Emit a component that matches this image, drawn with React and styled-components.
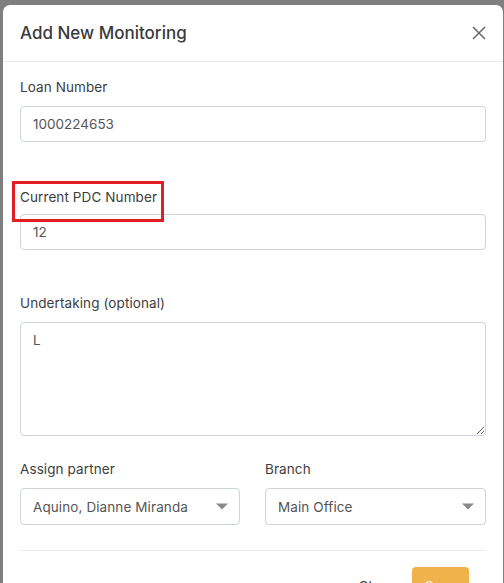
import React from 'react';
import styled, { createGlobalStyle } from 'styled-components';

const GlobalStyle = createGlobalStyle`
  html, body {
    margin: 0;
    padding: 0;
    background: #7f7f7f;
    overflow: hidden;
  }
  body {
    font-family: Inter, "Open Sans", sans-serif;
    color: #333;
  }
`;

const Backdrop = styled.div`
  height: 583px;
  padding: 5px 1px 0 3px;
  box-sizing: border-box;
`;

const Modal = styled.div`
  width: 500px;
  height: 600px;
  background: #fff;
  border-radius: 7px;
  overflow: hidden;
`;

const Header = styled.div`
  height: 57px;
  box-sizing: border-box;
  display: flex;
  align-items: center;
  justify-content: space-between;
  padding: 0 15px 0 17px;
  border-bottom: 1px solid #e9ecef;
`;

const Title = styled.h5`
  margin: 0;
  font-size: 17px;
  font-weight: 500;
  color: #3a3a3a;
`;

const CloseButton = styled.button`
  border: none;
  background: none;
  padding: 0;
  width: 18px;
  height: 18px;
  display: flex;
  align-items: center;
  justify-content: center;
  cursor: pointer;
`;

const Body = styled.div`
  padding: 15px 17px 0;
`;

const FormGroup = styled.div`
  margin-bottom: ${p => p.$space}px;
`;

const LabelWrap = styled.div`
  position: relative;
  display: inline-block;
`;

const Label = styled.label`
  display: block;
  font-size: 13.5px;
  line-height: 20px;
  letter-spacing: 0.1px;
  font-weight: 400;
  color: #3d3d3d;
  margin-bottom: ${p => p.$gap || 9}px;
`;

const Highlight = styled.span`
  position: absolute;
  top: -6px;
  left: -8px;
  width: 152px;
  height: 41px;
  box-sizing: border-box;
  border: 3px solid #e31b23;
  pointer-events: none;
`;

const Input = styled.input`
  display: block;
  width: 100%;
  height: 36px;
  box-sizing: border-box;
  padding: 0 12px;
  border: 1px solid #ced4da;
  border-radius: 4px;
  font-family: inherit;
  font-size: 13.5px;
  color: #555;
  outline: none;
`;

const TextArea = styled.textarea`
  display: block;
  width: 100%;
  height: 114px;
  box-sizing: border-box;
  padding: 9px 12px;
  border: 1px solid #ced4da;
  border-radius: 4px;
  font-family: inherit;
  font-size: 13.5px;
  color: #555;
  outline: none;
`;

const Row = styled.div`
  display: grid;
  grid-template-columns: 220px 221px;
  column-gap: 25px;
`;

const SelectBox = styled.div`
  height: 37px;
  box-sizing: border-box;
  display: flex;
  align-items: center;
  padding: 0 10px 0 12px;
  border: 1px solid #ced4da;
  border-radius: 4px;
`;

const Select = styled.select`
  flex: 1;
  min-width: 0;
  appearance: none;
  border: none;
  background: transparent;
  padding: 0;
  font-family: inherit;
  font-size: 13.5px;
  letter-spacing: 0.1px;
  color: #555;
  outline: none;
`;

const Divider = styled.hr`
  margin: 0;
  border: none;
  border-top: 1px solid #e9ecef;
`;

const Footer = styled.div`
  display: flex;
  justify-content: flex-end;
  align-items: center;
  gap: 4px;
  padding: 16px 17px 0 0;
`;

const Button = styled.button`
  height: 38px;
  padding: 0 13px;
  border: none;
  border-radius: 4px;
  font-family: inherit;
  font-size: 13.5px;
  background: ${p => (p.$primary ? '#f0b34b' : 'transparent')};
  color: ${p => (p.$primary ? '#fff' : '#444')};
  cursor: pointer;
`;

const Caret = () => (
  <svg width="14" height="7" viewBox="0 0 14 7">
    <path d="M1 0.5 L13 0.5 L7 6.5 Z" fill="#8a8a8a" />
  </svg>
);

export default function App() {
  return (
    <>
      <GlobalStyle />
      <Backdrop>
        <Modal>
          <Header>
            <Title>Add New Monitoring</Title>
            <CloseButton aria-label="Close">
              <svg width="14" height="14" viewBox="0 0 14 14">
                <path d="M1 1 L13 13 M13 1 L1 13" stroke="#6b6b6b" strokeWidth="1.6" />
              </svg>
            </CloseButton>
          </Header>
          <Body>
            <FormGroup $space={44}>
              <Label>Loan Number</Label>
              <Input defaultValue="1000224653" />
            </FormGroup>
            <FormGroup $space={43}>
              <LabelWrap>
                <Label $gap={7}>Current PDC Number</Label>
                <Highlight />
              </LabelWrap>
              <Input defaultValue="12" />
            </FormGroup>
            <FormGroup $space={23}>
              <Label>Undertaking (optional)</Label>
              <TextArea defaultValue="L" />
            </FormGroup>
            <Row>
              <FormGroup $space={25}>
                <Label>Assign partner</Label>
                <SelectBox>
                  <Select defaultValue="a">
                    <option value="a">Aquino, Dianne Miranda</option>
                  </Select>
                  <Caret />
                </SelectBox>
              </FormGroup>
              <FormGroup $space={25}>
                <Label>Branch</Label>
                <SelectBox>
                  <Select defaultValue="m">
                    <option value="m">Main Office</option>
                  </Select>
                  <Caret />
                </SelectBox>
              </FormGroup>
            </Row>
            <Divider />
            <Footer>
              <Button>Close</Button>
              <Button $primary>Save</Button>
            </Footer>
          </Body>
        </Modal>
      </Backdrop>
    </>
  );
}
